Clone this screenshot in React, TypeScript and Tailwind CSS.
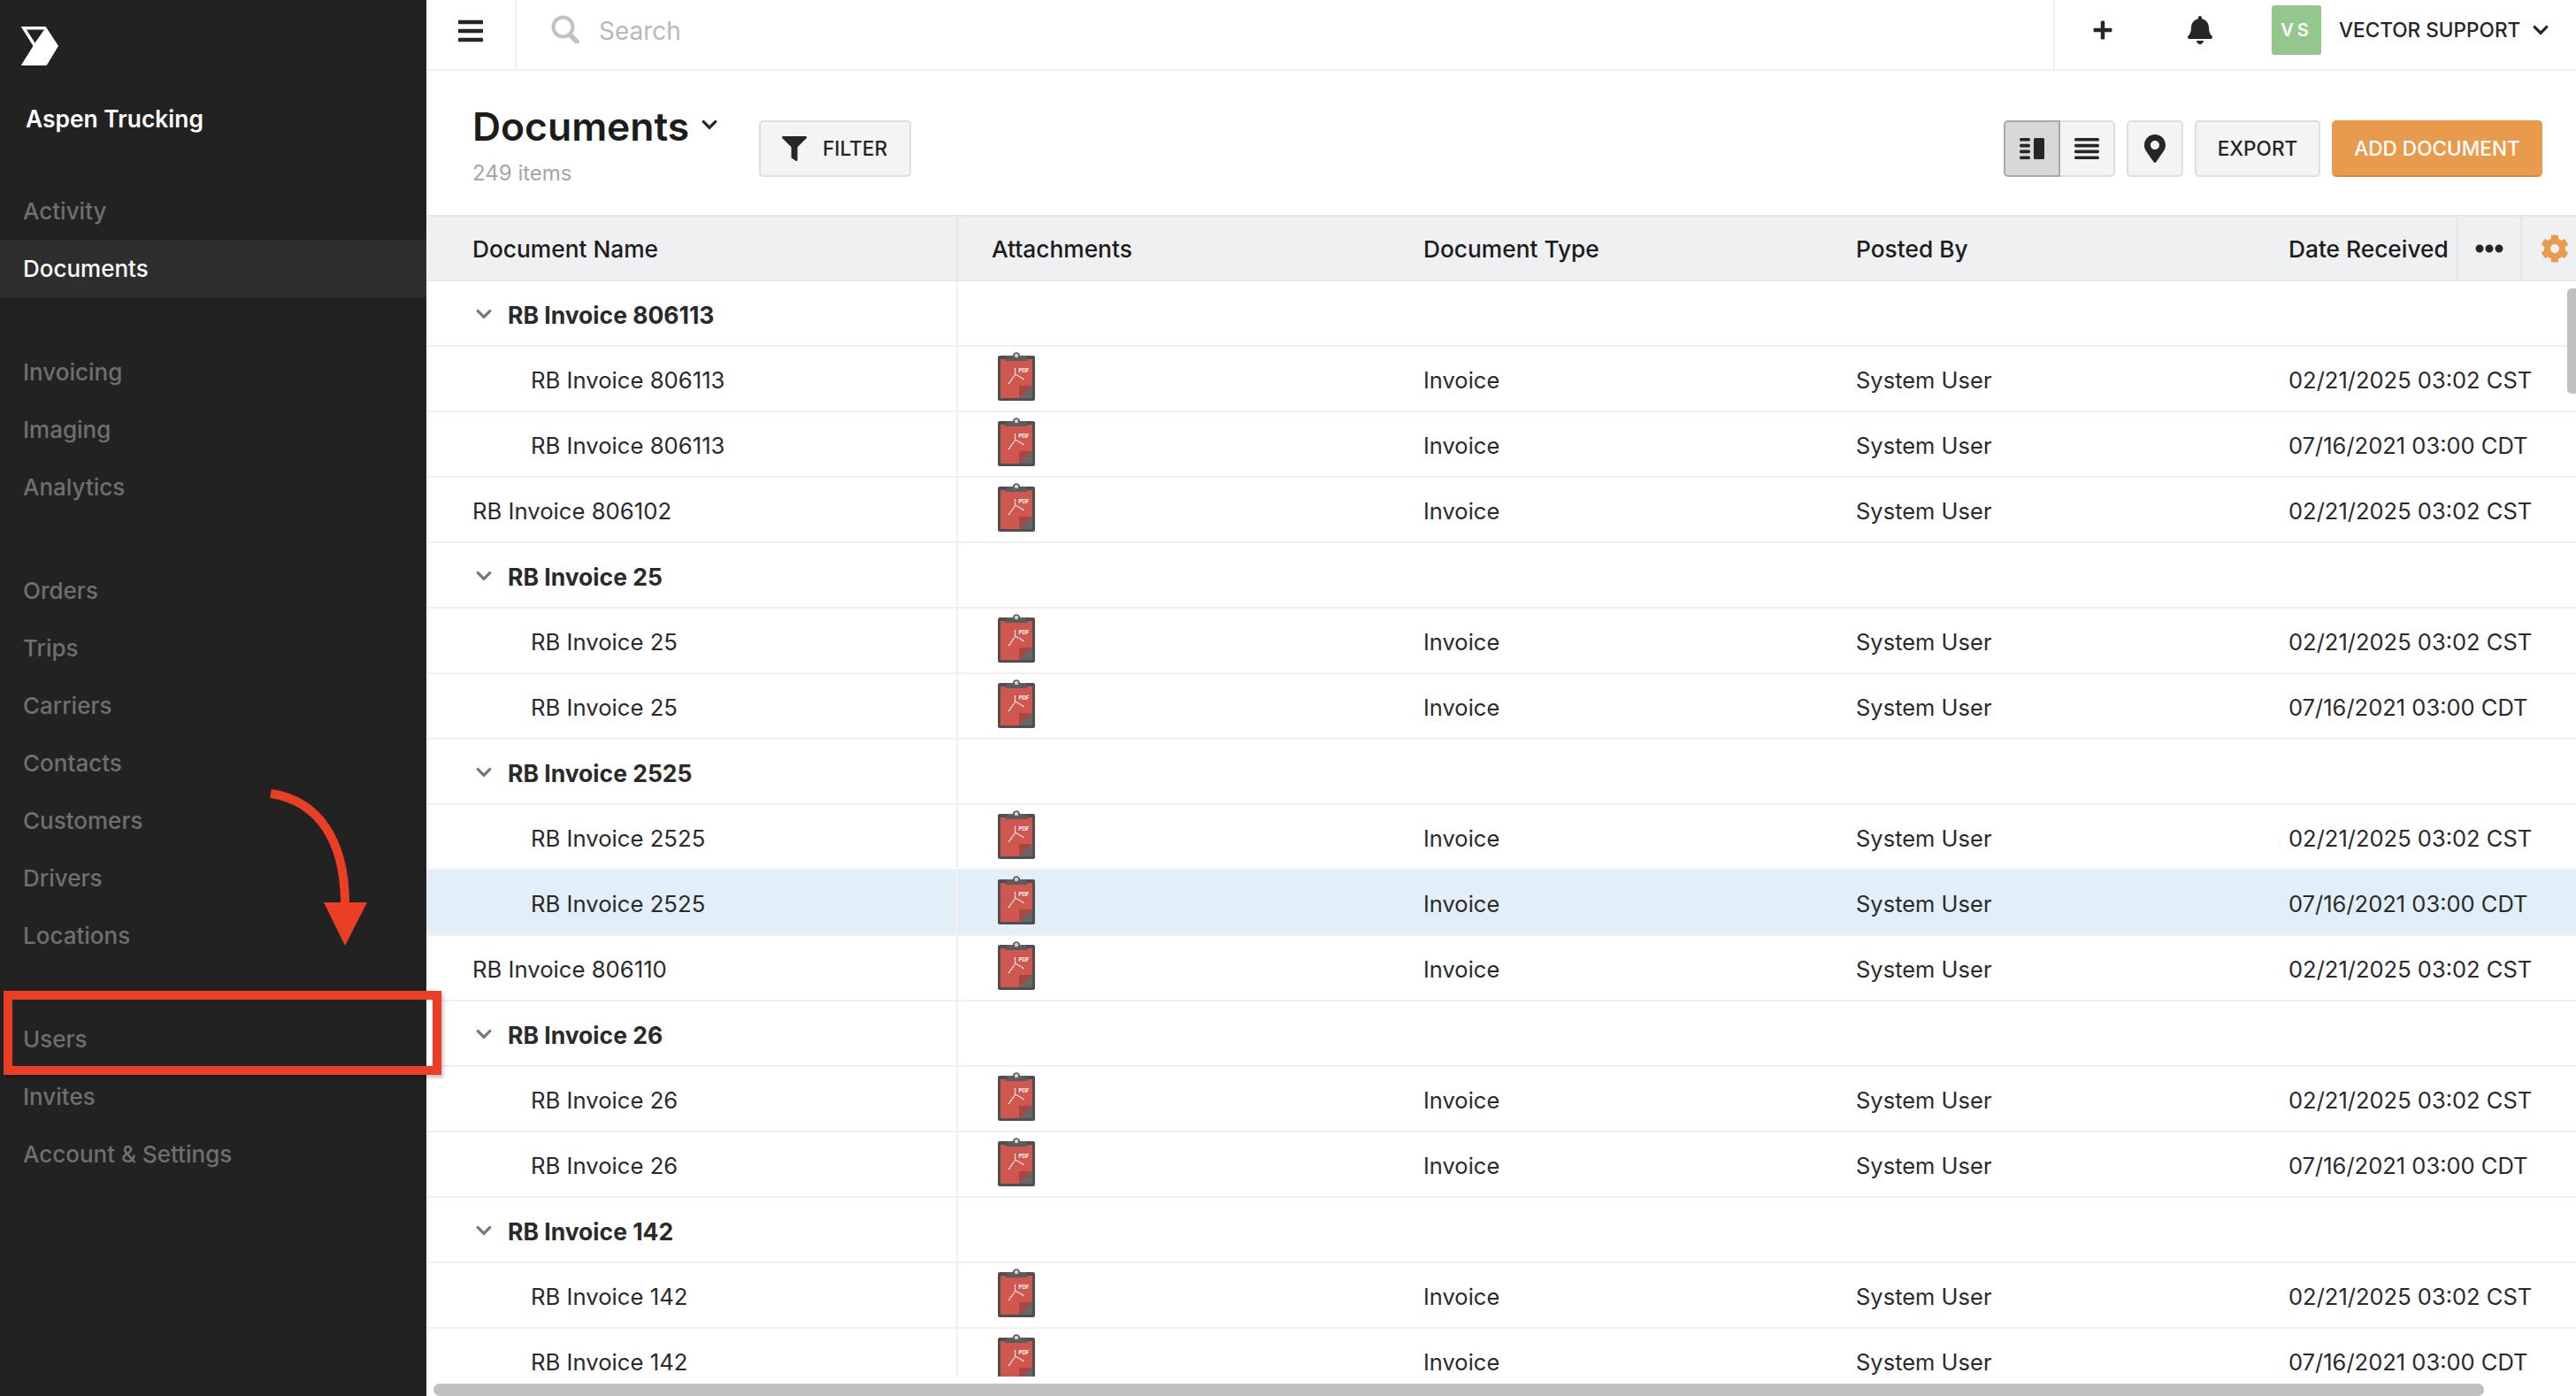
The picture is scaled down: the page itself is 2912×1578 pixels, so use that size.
import React from 'react';
import { FaBars, FaBell, FaChevronDown, FaCog, FaEllipsisH, FaFilter, FaMapMarkerAlt, FaPlus } from 'react-icons/fa';

type Row = { name: string; kind: 'group' | 'child' | 'plain'; date?: string; active?: boolean };

const CST = '02/21/2025 03:02 CST';
const CDT = '07/16/2021 03:00 CDT';

const rows: Row[] = [
  { name: 'RB Invoice 806113', kind: 'group' },
  { name: 'RB Invoice 806113', kind: 'child', date: CST },
  { name: 'RB Invoice 806113', kind: 'child', date: CDT },
  { name: 'RB Invoice 806102', kind: 'plain', date: CST },
  { name: 'RB Invoice 25', kind: 'group' },
  { name: 'RB Invoice 25', kind: 'child', date: CST },
  { name: 'RB Invoice 25', kind: 'child', date: CDT },
  { name: 'RB Invoice 2525', kind: 'group' },
  { name: 'RB Invoice 2525', kind: 'child', date: CST },
  { name: 'RB Invoice 2525', kind: 'child', date: CDT, active: true },
  { name: 'RB Invoice 806110', kind: 'plain', date: CST },
  { name: 'RB Invoice 26', kind: 'group' },
  { name: 'RB Invoice 26', kind: 'child', date: CST },
  { name: 'RB Invoice 26', kind: 'child', date: CDT },
  { name: 'RB Invoice 142', kind: 'group' },
  { name: 'RB Invoice 142', kind: 'child', date: CST },
  { name: 'RB Invoice 142', kind: 'child', date: CDT },
];

const navGroups = [
  ['Activity', 'Documents'],
  ['Invoicing', 'Imaging', 'Analytics'],
  ['Orders', 'Trips', 'Carriers', 'Contacts', 'Customers', 'Drivers', 'Locations'],
  ['Users', 'Invites', 'Account & Settings'],
];

const Logo = () => (
  <svg width="42" height="44" viewBox="24 30 42 44" className="block">
    <path d="M24.5 30.5H51.5L65.5 52L52.5 73.5H24.5L38 52Z" fill="#fff" stroke="#fff" strokeLinejoin="round" />
    <path d="M30 33.5H50L39.5 48.5Z" fill="#222222" />
  </svg>
);

const PdfIcon = () => (
  <svg width="42" height="55" viewBox="0 0 42 55" className="block">
    <rect x="0" y="4" width="42" height="51" rx="2" fill="#4f4f4f" />
    <rect x="3" y="8" width="36" height="44" fill="#cf574f" />
    <path d="M8 10L11 4H17C17 -1 25 -1 25 4H31L34 10Z" fill="#5c5c5c" />
    <circle cx="21" cy="4" r="2.2" fill="#cfcfcf" />
    <path d="M24 38H39L24 52Z" fill="#a84643" />
    <path d="M39 38V52H24Z" fill="#666666" />
    <path d="M19.5 18V24.5M12 36L20 25L30 31" fill="none" stroke="#fff" strokeWidth="1.2" strokeDasharray="3 0.6" />
    <text x="23.5" y="22.5" fill="#fff" fontSize="6" fontWeight="700" fontFamily="Inter, sans-serif">PDF</text>
  </svg>
);

const DetailViewIcon = () => (
  <svg width="28" height="24" viewBox="0 0 28 24" fill="#262626" className="block">
    <rect x="0" y="0" width="12" height="3.6" rx="1.6" />
    <rect x="0" y="6.8" width="12" height="3.6" rx="1.6" />
    <rect x="0" y="13.6" width="12" height="3.6" rx="1.6" />
    <rect x="0" y="20.4" width="12" height="3.6" rx="1.6" />
    <rect x="16" y="0" width="12" height="24" rx="1.6" />
  </svg>
);

const ListViewIcon = () => (
  <svg width="28" height="24" viewBox="0 0 28 24" fill="#262626" className="block">
    <rect x="0" y="0" width="28" height="3.6" rx="1.6" />
    <rect x="0" y="6.8" width="28" height="3.6" rx="1.6" />
    <rect x="0" y="13.6" width="28" height="3.6" rx="1.6" />
    <rect x="0" y="20.4" width="28" height="3.6" rx="1.6" />
  </svg>
);

const SearchIcon = () => (
  <svg width="32" height="32" viewBox="0 0 32 32" fill="none" stroke="#c2c2c2" className="block -mt-[4px]">
    <circle cx="13.5" cy="13.5" r="11" strokeWidth="4" />
    <path d="M21 22L29 30" strokeWidth="5.5" strokeLinecap="round" />
  </svg>
);

const Sidebar = () => (
  <aside className="w-[482px] shrink-0 bg-[#222222] flex flex-col">
    <div className="h-[206px] shrink-0 flex flex-col items-start pt-[30px] pl-[24px]">
      <Logo />
      <div className="mt-[43px] ml-[5px] text-[26.4px] leading-[34px] font-semibold text-white">Aspen Trucking</div>
    </div>
    <nav className="flex flex-col gap-[52px]">
      {navGroups.map((group) => (
        <div key={group[0]} className="flex flex-col">
          {group.map((item) => (
            <div
              key={item}
              className={
                item === 'Documents'
                  ? 'h-[65px] flex items-center pl-[26px] text-[26px] font-medium bg-[#2e2e2e] text-white'
                  : 'h-[65px] flex items-center pl-[26px] text-[26px] font-medium text-[#6f6f6f]'
              }
            >
              {item}
            </div>
          ))}
        </div>
      ))}
    </nav>
  </aside>
);

const TopBar = () => (
  <header className="h-[80px] shrink-0 border-b-2 border-[#f0f0f0] flex items-stretch">
    <div className="w-[102px] border-r-2 border-[#f0f0f0] flex items-center pl-[34px] pb-[8px] text-[#262626]">
      <FaBars size={32} />
    </div>
    <div className="flex-1 flex items-center pl-[39px] gap-[22px] pb-[8px]">
      <SearchIcon />
      <span className="text-[28px] text-[#b8b8b8]">Search</span>
    </div>
    <div className="w-[591px] border-l-2 border-[#f0f0f0] flex items-center pl-[42px] pb-[10px] text-[#262626]">
      <FaPlus size={24} />
      <span className="ml-[82px]"><FaBell size={32} /></span>
      <div className="ml-[65px] w-[56px] h-[56px] rounded-[3px] bg-[#93c78c] flex items-center justify-center text-white text-[20px] font-semibold tracking-[4px]">VS</div>
      <span className="ml-[20px] text-[22.6px] font-medium">VECTOR SUPPORT</span>
      <span className="ml-[13px]"><FaChevronDown size={20} /></span>
    </div>
  </header>
);

const PageHeader = () => (
  <section className="h-[163px] shrink-0 flex items-start pt-[56px] pl-[52px] pr-[38px]">
    <div className="w-[324px] -mt-[24px]">
      <div className="flex items-center">
        <h1 className="text-[44.4px] leading-[62px] font-semibold text-[#1c1c1c]">Documents</h1>
        <FaChevronDown size={20} className="ml-[13px] -mt-[4px] text-[#262626]" />
      </div>
      <div className="mt-[7px] text-[24px] leading-[30px] text-[#a6a6a6]">249 items</div>
    </div>
    <button className="h-[64px] w-[172px] rounded-[5px] border-2 border-[#dedede] bg-[#f4f4f4] flex items-center pl-[24px] gap-[18px] text-[#262626]">
      <FaFilter size={28} />
      <span className="text-[22.6px] font-medium">FILTER</span>
    </button>
    <div className="ml-auto flex items-center gap-[13px]">
      <div className="flex">
        <button className="h-[64px] w-[64px] rounded-l-[5px] border-2 border-[#a9a9a9] bg-[#d8d8d8] flex items-center justify-center">
          <DetailViewIcon />
        </button>
        <button className="h-[64px] w-[62px] rounded-r-[5px] border-2 border-l-0 border-[#dedede] bg-[#f4f4f4] flex items-center justify-center">
          <ListViewIcon />
        </button>
      </div>
      <button className="h-[64px] w-[64px] rounded-[5px] border-2 border-[#dedede] bg-[#f4f4f4] flex items-center justify-center text-[#262626]">
        <FaMapMarkerAlt size={32} />
      </button>
      <button className="h-[64px] w-[142px] rounded-[5px] border-2 border-[#dedede] bg-[#f4f4f4] text-[22.6px] font-medium text-[#262626]">EXPORT</button>
      <button className="h-[64px] w-[238px] rounded-[5px] border-2 border-[#e99b4d] border-b-[#d08a43] bg-[#e99b4d] text-[22.6px] font-medium text-white">ADD DOCUMENT</button>
    </div>
  </section>
);

const TableHead = () => (
  <div className="h-[75px] shrink-0 bg-[#eff0f2] border-y-2 border-[#e6e7e9] flex items-center text-[26.3px] font-medium text-[#1c1c1c]">
    <div className="w-[601px] shrink-0 h-full flex items-center pl-[52px] pt-[3px] border-r-2 border-[#e6e7e9]">Document Name</div>
    <div className="w-[488px] shrink-0 pl-[38px] pt-[3px]">Attachments</div>
    <div className="w-[489px] shrink-0 pl-[38px] pt-[3px]">Document Type</div>
    <div className="w-[489px] shrink-0 pl-[38px] pt-[3px]">Posted By</div>
    <div className="pl-[38px] w-[228px] shrink-0 pt-[3px] whitespace-nowrap">Date Received</div>
    <div className="w-[74px] shrink-0 h-full flex items-center justify-center border-x-2 border-[#e6e7e9] text-[#262626]">
      <FaEllipsisH size={32} />
    </div>
    <div className="flex-1 h-full flex items-center pl-[21px] text-[#e99b4d]">
      <FaCog size={32} />
    </div>
  </div>
);

const TableRow = ({ row }: { row: Row }) => (
  <div className={row.active ? 'h-[74px] shrink-0 flex border-b-2 border-[#f0f0f0] bg-[#e3eff8]' : 'h-[74px] shrink-0 flex border-b-2 border-[#f0f0f0]'}>
    <div className="w-[601px] shrink-0 flex items-center pt-[5px] border-r-2 border-[#f0f0f0]">
      {row.kind === 'group' && (
        <div className="flex items-center pl-[55px] gap-[17px] font-bold text-[26.5px]">
          <FaChevronDown size={20} className="-mt-[4px] text-[#777777]" />
          <span>{row.name}</span>
        </div>
      )}
      {row.kind === 'child' && <span className="pl-[118px] text-[25.7px]">{row.name}</span>}
      {row.kind === 'plain' && <span className="pl-[52px] text-[25.7px]">{row.name}</span>}
    </div>
    {row.kind !== 'group' && (
      <>
        <div className="w-[488px] shrink-0 pl-[45px] pt-[6px]">
          <PdfIcon />
        </div>
        <div className="w-[489px] shrink-0 pl-[38px] pt-[5px] flex items-center">Invoice</div>
        <div className="w-[489px] shrink-0 pl-[38px] pt-[5px] flex items-center">System User</div>
        <div className="flex-1 pl-[38px] pt-[5px] flex items-center whitespace-nowrap">{row.date}</div>
      </>
    )}
  </div>
);

export default function App() {
  return (
    <div className="relative w-full h-[1578px] overflow-hidden flex bg-white font-[Inter,sans-serif] text-[25.5px] text-[#2a2a2a]">
      <Sidebar />
      <main className="flex-1 min-w-0 flex flex-col">
        <TopBar />
        <PageHeader />
        <TableHead />
        <div className="relative h-[1238px] shrink-0 overflow-hidden flex flex-col">
          {rows.map((row, i) => (
            <TableRow key={i} row={row} />
          ))}
          <div className="absolute right-0 top-[8px] w-[10px] h-[119px] rounded-l-[5px] bg-[#c0c0c0]" />
        </div>
        <div className="pt-[8px] pl-[8px]">
          <div className="w-[2318px] h-[14px] rounded-full bg-[#c0c0c0]" />
        </div>
      </main>

      {/* annotation over the screenshot */}
      <div className="absolute left-[4px] top-[1120px] w-[495px] h-[95px] border-[10px] border-[#ea3f24] shadow-[2px_3px_4px_rgba(0,0,0,0.25)]" />
      <svg className="absolute left-[300px] top-[890px]" width="125" height="185" viewBox="300 890 125 185">
        <path d="M306 897C360 905 390 950 390 1022" fill="none" stroke="#ea3f24" strokeWidth="10" />
        <path d="M366 1020H415L390 1069Z" fill="#ea3f24" />
      </svg>
    </div>
  );
}
